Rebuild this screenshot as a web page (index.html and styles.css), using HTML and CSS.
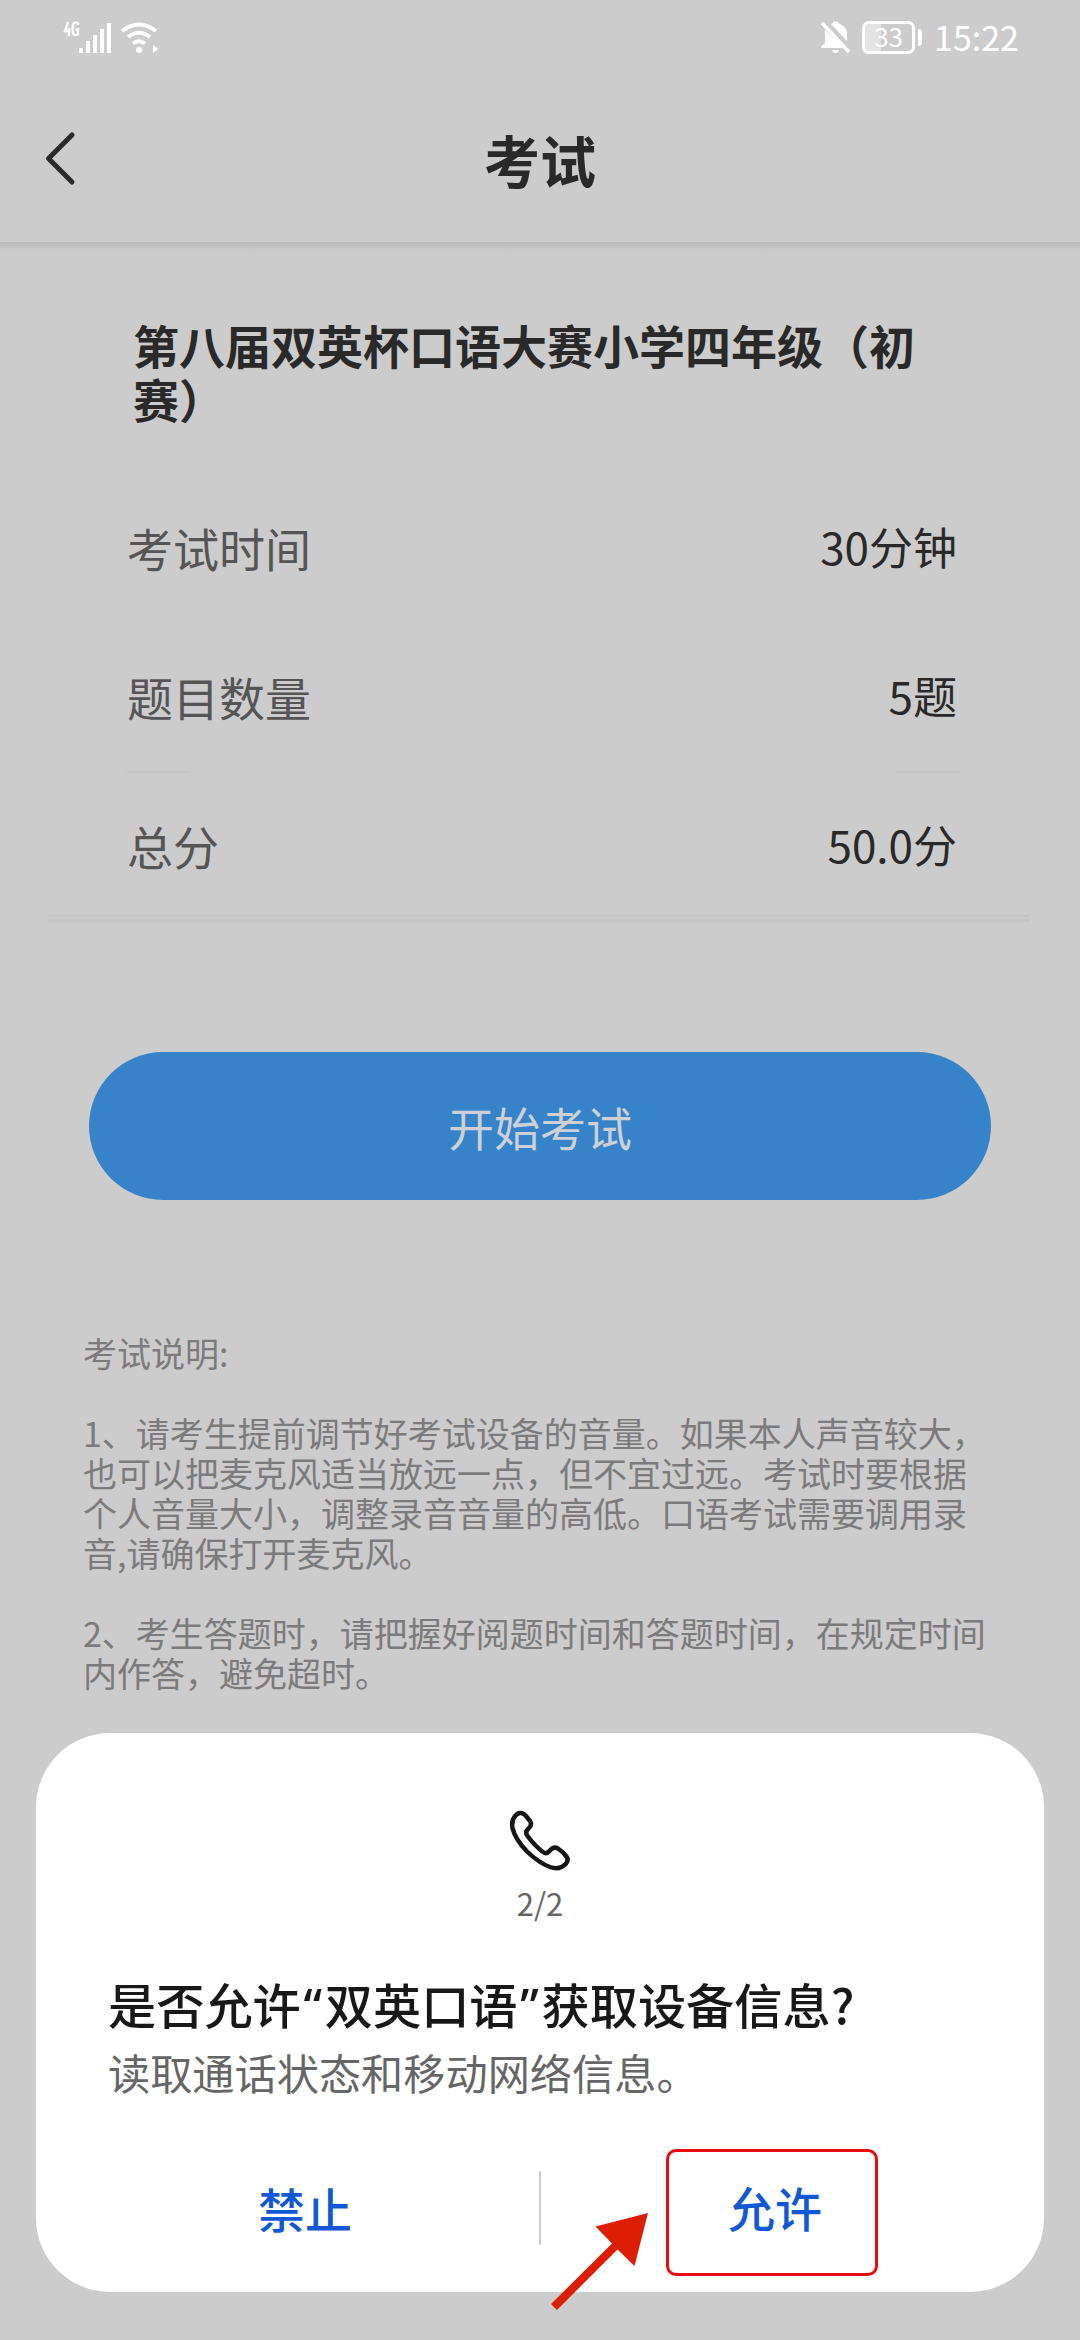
FILE: index.html
```html
<!DOCTYPE html>
<html lang="zh-CN">
<head>
<meta charset="utf-8">
<title>考试</title>
<link rel="stylesheet" href="styles.css">
</head>
<body>
<div class="screen">
  <div class="status">
    <div class="status-left">
      <svg width="98" height="34" viewBox="0 0 98 34" fill="#fff">
        <g fill="none" stroke="#fff" stroke-width="2.4">
          <path d="M5 2L2 11H7M6 8V16"/>
          <path d="M15 5V3.500Q14 2 12 2.500Q9.500 3 9.500 9T12 15Q15 15 15 13V9.500H12.500"/>
        </g>
        <path d="M16 28h4v5h-4zM23 21h4v12h-4zM30 15h4v18h-4zM37 9h4v24h-4zM44 3h4v30h-4z"/>
        <g fill="none" stroke="#fff" stroke-width="4">
          <path d="M59 11Q76-2 93 11"/>
          <path d="M65 17Q76 8.500 87 17"/>
          <path d="M70 23.500Q76 19 82 23.500"/>
        </g>
        <circle cx="76" cy="30" r="3"/>
        <path d="M90 25l5.500 4-5.500 4z"/>
      </svg>
    </div>
    <div class="status-right">
      <svg width="32" height="34" viewBox="0 0 32 34" fill="#fff">
        <path d="M11 4Q13 3.500 13.500 1.500h4Q18 3.500 20 4Q27 7 27 14V21zM5 10L24 28H1.500V26L5 23zM12 30h7q-1 3-3.500 3t-3.500-3z"/>
        <path d="M2 3L29 32" stroke="#fff" stroke-width="3.400"/>
      </svg>
      <div class="battery"><span class="battery-level">33</span></div>
      <span class="clock">15:22</span>
    </div>
  </div>

  <header class="header">
    <svg class="back" width="36" height="56" viewBox="0 0 36 56"><path d="M30 5L6.500 28.500L30 52" fill="none" stroke="#2a2a2a" stroke-width="5" stroke-linecap="round" stroke-linejoin="round"/></svg>
    <h1 class="header-title">考试</h1>
  </header>

  <main class="content">
    <h2 class="exam-title">第八届双英杯口语大赛小学四年级（初<br>赛）</h2>
    <div class="facts">
      <div class="fact"><span class="fact-label">考试时间</span><span class="fact-value">30分钟</span></div>
      <div class="fact"><span class="fact-label">题目数量</span><span class="fact-value">5题</span></div>
      <div class="ticks"><i></i><i></i></div>
      <div class="fact"><span class="fact-label">总分</span><span class="fact-value">50.0分</span></div>
    </div>
    <div class="rule"></div>
    <button class="start">开始考试</button>
    <section class="notes">
      <p>考试说明:</p>
      <p>1、请考生提前调节好考试设备的音量。如果本人声音较大，<br>也可以把麦克风适当放远一点，但不宜过远。考试时要根据<br>个人音量大小，调整录音音量的高低。口语考试需要调用录<br>音,请确保打开麦克风。</p>
      <p>2、考生答题时，请把握好阅题时间和答题时间，在规定时间<br>内作答，避免超时。</p>
    </section>
  </main>

  <div class="dialog">
    <svg class="phone" width="64" height="64" viewBox="0 0 64 64"><path d="M7.500 6.500C11 2.500 15.500 3.500 18 7L22 12Q24.500 16 20.500 19.500Q16.500 23 19.500 27Q27 37 35 43Q38.500 45.500 41.500 42Q45.500 37 50 39.500Q55 43 58.500 47.500Q61 51 58 54.500Q52 61.500 42 58Q31 54 19 42.500Q7 30 4.500 19Q3 11.500 7.500 6.500Z" fill="none" stroke="#161616" stroke-width="4.500" stroke-linejoin="round"/></svg>
    <div class="step">2/2</div>
    <h3 class="question">是否允许<span class="quote">“</span>双英口语<span class="quote">”</span>获取设备信息?</h3>
    <p class="detail">读取通话状态和移动网络信息。</p>
    <div class="actions">
      <button class="action">禁止</button>
      <i class="divider"></i>
      <button class="action"><span class="highlight">允许</span></button>
    </div>
  </div>
  <svg class="arrow" width="100" height="100" viewBox="0 0 100 100"><path d="M98 1L45.500 14.500L62 31.500L1 92L7 98L67.500 37.500L84.500 54Z" fill="#dc1e05"/></svg>
</div>
</body>
</html>
```
FILE: styles.css
```css
* { box-sizing: border-box; margin: 0; padding: 0; }
body { background: #ccc; }
button { border: 0; background: none; font-family: inherit; }
svg { display: block; flex: none; }
.screen {
  position: relative;
  width: 1080px;
  height: 2340px;
  overflow: hidden;
  background: #ccc;
  color: #292929;
  font-family: "Noto Sans CJK SC", sans-serif;
}
.status {
  display: flex;
  justify-content: space-between;
  align-items: center;
  height: 74px;
  padding: 0 61px 0 63px;
}
.status-right { display: flex; align-items: center; color: #fff; }
.battery {
  position: relative;
  width: 53px;
  height: 33px;
  margin: 0 19px 0 10px;
  border: 3px solid #fff;
  border-radius: 7px;
  background: linear-gradient(90deg, #e3e3e3 33%, transparent 33%);
}
.battery::after {
  content: "";
  position: absolute;
  top: 5px;
  right: -10px;
  width: 4px;
  height: 17px;
  border-radius: 0 4px 4px 0;
  background: #fff;
}
.battery-level { display: block; font-size: 26px; line-height: 24px; text-align: center; }
.clock { font-size: 34px; line-height: 40px; }
.header {
  display: flex;
  align-items: center;
  height: 168px;
  padding: 0 42px;
}
.header-title { flex: 1; margin-right: 36px; padding-top: 2px; text-align: center; font-size: 56px; line-height: 64px; }
.content {
  display: flex;
  flex-direction: column;
  padding: 75px 50px 0;
  background: linear-gradient(#bbb, #c1c1c1 4px, #c9c9c9 7px, #ccc 12px) no-repeat;
}
.exam-title { margin: 0 83px 48px; font-size: 46px; line-height: 54px; }
.facts { margin: 0 70px 0 77px; }
.fact { display: flex; justify-content: space-between; align-items: center; height: 149px; }
.fact-label { padding-bottom: 1px; font-size: 46px; line-height: 54px; color: #555; }
.fact-value { padding: 0 3px 4px 0; font-size: 44px; line-height: 52px; }
.ticks { display: flex; justify-content: space-between; height: 2px; margin-bottom: -2px; }
.ticks i { width: 64px; background: #c5c5c5; }
.rule { height: 7px; margin: -5px 0 0 -2px; border: solid #c5c5c5; border-width: 2px 0 3px; }
.start {
  height: 148px;
  margin: 130px 39px 133px;
  border-radius: 74px;
  background: #3783ca;
  color: #cdd0d7;
  font-size: 46px;
}
.notes { display: grid; gap: 40px; margin-left: 33px; font-size: 34px; line-height: 40px; color: #7b7b7b; white-space: nowrap; }
.dialog {
  position: absolute;
  left: 36px;
  top: 1733px;
  width: 1008px;
  height: 559px;
  padding: 76px 34px 0;
  border-radius: 74px;
  background: #fff;
}
.phone { margin: 0 auto; }
.step { margin-top: 10px; text-align: center; font-size: 31px; line-height: 40px; color: #666; }
.question { margin: 50px 0 0 38px; font-size: 48.2px; font-weight: 500; line-height: 60px; color: #181818; }
.quote { display: inline-block; width: 24px; font-family: "Noto Sans", sans-serif; line-height: 1; text-align: center; }
.detail { margin: 12px 0 0 38px; font-size: 42.2px; line-height: 54px; color: #666; }
.actions { display: flex; align-items: center; margin-top: 39px; }
.action { display: flex; flex: 1; justify-content: center; align-items: center; height: 140px; padding-bottom: 2px; color: #1158d6; font-size: 47px; font-weight: 500; }
.divider { width: 2px; height: 74px; margin: 0 -1px; background: #ccc; }
.highlight {
  display: grid;
  place-items: center;
  width: 212px;
  height: 127px;
  margin: 10px 0 0 -6px;
  padding: 0 0 12px 6px;
  border: 3px solid #ec0a0a;
  border-radius: 10px;
}
.arrow { position: absolute; left: 550px; top: 2212px; }
```
